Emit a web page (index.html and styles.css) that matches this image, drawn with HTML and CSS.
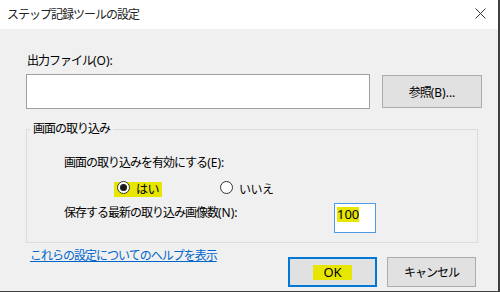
FILE: index.html
```html
<!DOCTYPE html>
<html>
<head>
    <title>ステップ記録ツールの設定</title>
    <link rel="stylesheet" href="styles.css">
</head>
<body>
    <div class="window">
        <div class="titlebar">
            <span class="title">ステップ記録ツールの設定</span>
            <svg class="close" width="11" height="11" viewBox="0 0 11 11">
                <path d="M0.5 0.5 L10.5 10.5 M10.5 0.5 L0.5 10.5" stroke="#333" stroke-width="1" fill="none"/>
            </svg>
        </div>

        <div class="content">
            <div class="field-label">出力ファイル<span class="key">(O):</span></div>
            <div class="file-row">
                <div class="textbox"></div>
                <button class="btn browse">参照<span class="key">(B)...</span></button>
            </div>

            <fieldset class="group">
                <legend>画面の取り込み</legend>
                <div class="group-body">
                    <div class="row-label">画面の取り込みを有効にする<span class="key">(E):</span></div>
                    <div class="radios">
                        <span class="radio-item hl"><span class="radio checked"></span>はい</span>
                        <span class="radio-item"><span class="radio"></span>いいえ</span>
                    </div>
                    <div class="count-row">
                        <span class="count-label">保存する最新の取り込み画像数<span class="key">(N):</span></span>
                        <span class="numbox"><span class="hl num">100</span></span>
                    </div>
                </div>
            </fieldset>

            <div class="bottom-row">
                <a class="help" href="#">これらの設定についてのヘルプを表示</a>
                <button class="btn ok"><span class="hl ok-text">OK</span></button>
                <button class="btn cancel">キャンセル</button>
            </div>
        </div>
    </div>
</body>
</html>
```

FILE: styles.css
```css
body { margin: 0; font-family: "Noto Sans", "Noto Sans CJK JP", sans-serif; font-size: 12px; line-height: 16px; color: #000; }
.window { width: 500px; height: 292px; box-sizing: border-box; background: #f0f0f0; border-right: 2px solid #404040; border-bottom: 1px solid #404040; overflow: hidden; }
.key { letter-spacing: 0; }

.titlebar { height: 29px; background: #fff; display: flex; align-items: center; padding-left: 7px; }
.title { flex: 1; letter-spacing: -1px; color: #222; }
.close { margin-right: 12px; margin-top: -2px; }

.content { padding: 24px 0 0 26px; }
.field-label { margin-left: 1px; margin-bottom: 5px; letter-spacing: -1px; }
.file-row { display: flex; align-items: flex-start; }
.textbox { width: 344px; height: 35px; box-sizing: border-box; background: #fff; border: 1px solid #a0a0a0; }

.btn { font-family: inherit; font-size: 12px; color: #000; background: #e1e1e1; border: 1px solid #adadad; padding: 0; box-sizing: border-box; }
.browse { width: 100px; height: 33px; margin-left: 12px; margin-top: 1px; letter-spacing: -1px; }

.group { margin: 12px 0 0; padding: 0; width: 452px; height: 122px; box-sizing: border-box; border: 1px solid #dcdcdc; min-width: 0; }
.group legend { margin-left: 3px; padding: 0 3px; letter-spacing: -1px; }
.group-body { padding-left: 37px; }
.row-label { margin-top: 18px; letter-spacing: -1px; }

.radios { display: flex; margin-top: 11px; margin-left: 50px; height: 15px; }
.radio-item { display: flex; align-items: flex-start; padding: 0 3px; height: 15px; line-height: 15px; letter-spacing: -0.5px; }
.radio-item + .radio-item { margin-left: 55px; }
.radio { width: 13px; height: 13px; box-sizing: border-box; border: 1px solid #333; border-radius: 50%; background: #fff; margin-top: -1px; margin-right: 6px; display: flex; align-items: center; justify-content: center; }
.radio.checked::after { content: ""; width: 7px; height: 7px; border-radius: 50%; background: #1a1a1a; }
.hl { background: #e6e600; }

.count-row { display: flex; align-items: flex-start; margin-top: 6px; }
.count-label { width: 270px; margin-top: 2px; letter-spacing: -1px; }
.numbox { width: 42px; height: 30px; box-sizing: border-box; background: #fff; border: 1px solid #4c9be8; padding: 3px 0 0 2px; }
.num { display: inline-block; font-size: 13px; height: 15px; line-height: 15px; }

.bottom-row { display: flex; align-items: flex-start; width: 450px; }
.help { margin: 5px 0 0 4px; color: #0066cc; text-decoration: underline; letter-spacing: -1px; }
.ok, .cancel { width: 89px; height: 30px; margin-top: 14px; }
.ok { margin-left: auto; border: 2px solid #0078d7; }
.ok-text { display: inline-block; padding: 0 10px; height: 15px; line-height: 15px; font-size: 13px; }
.cancel { margin-left: 10px; letter-spacing: -1px; }
```
